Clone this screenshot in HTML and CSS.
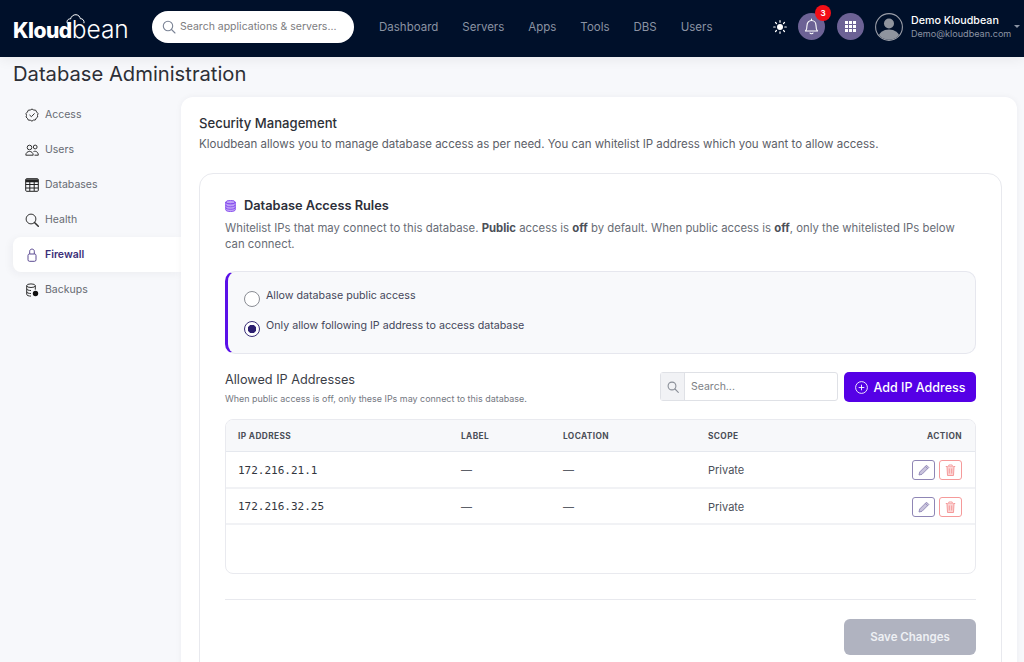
FILE: index.html
```html
<!DOCTYPE html>
<html lang="en">
<head>
  <meta charset="UTF-8">
  <title>Database Administration</title>
  <link rel="stylesheet" href="styles.css">
</head>
<body>
  <header class="topbar">
    <a class="logo" href="#">
      <svg class="logoCloud" width="19" height="10" viewBox="0 0 19 10"><path d="M1.500 9.500C.2 7 2 4.500 4.500 5 5 2.500 7.500.5 10 .7c2.500.2 4 2 4.300 4 2.300-.3 4.200 1.800 3.700 4.500" fill="none" stroke="#fff" stroke-width="1"/></svg>
      <b>Kloud</b><span>bean</span>
    </a>
    <div class="topSearch">
      <svg width="14" height="14" viewBox="0 0 14 14" fill="none" stroke="#7b8496" stroke-width="1.100"><circle cx="6" cy="6" r="4.700"/><path d="M9.500 9.500l3.500 3.500" stroke-linecap="round"/></svg>
      <span>Search applications &amp; servers...</span>
    </div>
    <nav class="nav">
      <a href="#">Dashboard</a>
      <a href="#">Servers</a>
      <a href="#">Apps</a>
      <a href="#">Tools</a>
      <a href="#">DBS</a>
      <a href="#">Users</a>
    </nav>
    <div class="tools">
      <svg class="sun" width="14" height="14" viewBox="0 0 14 14" stroke="#fff" stroke-width="1.200" stroke-linecap="round"><circle cx="7" cy="7" r="3" fill="#fff" stroke="none"/><path d="M7 .7v1.500M7 11.800v1.500M.7 7h1.500M11.800 7h1.500M2.500 2.500l1 1M10.500 10.500l1 1M2.500 11.500l1-1M10.500 3.500l1-1"/></svg>
      <div class="circleBtn">
        <svg width="15" height="17" viewBox="0 0 15 17" fill="none" stroke="#fff" stroke-width="1.100"><path d="M1.500 13c1.200-1.200 1.500-2.500 1.500-5.500C3 4.500 5 2.500 7.500 2.500S12 4.500 12 7.500c0 3 .3 4.300 1.500 5.500z" stroke-linejoin="round"/><path d="M7.500 1v1.500M6 15c.5 1 2.500 1 3 0" stroke-linecap="round"/></svg>
        <span class="badge">3</span>
      </div>
      <div class="circleBtn">
        <svg width="11" height="11" viewBox="0 0 11 11" fill="#fff"><rect width="3" height="3"/><rect x="4" width="3" height="3"/><rect x="8" width="3" height="3"/><rect y="4" width="3" height="3"/><rect x="4" y="4" width="3" height="3"/><rect x="8" y="4" width="3" height="3"/><rect y="8" width="3" height="3"/><rect x="4" y="8" width="3" height="3"/><rect x="8" y="8" width="3" height="3"/></svg>
      </div>
      <svg class="avatar" width="28" height="28" viewBox="0 0 28 28"><defs><clipPath id="avatarClip"><circle cx="14" cy="14" r="12.800"/></clipPath></defs><g clip-path="url(#avatarClip)" fill="#8f949e"><circle cx="14" cy="10.500" r="5"/><ellipse cx="14" cy="24" rx="10.500" ry="7.500"/></g><circle cx="14" cy="14" r="13.400" fill="none" stroke="#9a9ea8" stroke-width="1.100"/></svg>
      <div class="who">
        <div class="whoName">Demo Kloudbean</div>
        <div class="whoMail">Demo@kloudbean.com</div>
      </div>
      <i class="caret"></i>
    </div>
  </header>

  <h1 class="pageTitle">Database Administration</h1>

  <div class="layout">
    <ul class="side">
      <li>
        <svg width="14" height="14" viewBox="0 0 14 14" fill="none" stroke="#333" stroke-width="1"><path d="M7 1l1.700 1 2 .2.9 1.800 1.400 1.500L12.500 7.500l.2 1.500-1.500 1.200-.9 1.800-2 .1L7 13.200l-1.700-1-2-.1-.9-1.800L1 9l.5-1.500L1 5.500 2.400 4l.9-1.800 2-.2z" stroke-linejoin="round"/><path d="M4.800 7.200l1.600 1.500 2.900-3" stroke-linecap="round"/></svg>
        Access
      </li>
      <li>
        <svg width="14" height="14" viewBox="0 0 14 14" fill="none" stroke="#333" stroke-width="1"><circle cx="4.500" cy="4.500" r="2.300"/><circle cx="10.200" cy="4" r="1.900"/><path d="M.8 12.200c0-5 7.400-5 7.400 0zM9.500 12.200h3.800c0-3.300-2.500-4.500-4.800-3.700"/></svg>
        Users
      </li>
      <li>
        <svg width="14" height="14" viewBox="0 0 14 14" fill="none" stroke="#222" stroke-width="1"><rect x=".7" y=".7" width="12.600" height="12.600" rx="1"/><path d="M.7 2.800h12.600" stroke-width="3"/><path d="M.7 6.500h12.600M.7 10h12.600M4.800 3v10M9.200 3v10"/></svg>
        Databases
      </li>
      <li>
        <svg width="14" height="14" viewBox="0 0 14 14" fill="none" stroke="#333" stroke-width="1"><circle cx="6" cy="6" r="4.900"/><path d="M9.500 9.500l3.800 3.800" stroke-width="1.500" stroke-linecap="round"/></svg>
        Health
      </li>
      <li class="active">
        <svg width="14" height="14" viewBox="0 0 14 14" fill="none" stroke="#5b4a92" stroke-width="1"><rect x="3" y="6" width="8" height="7.300" rx="1.500"/><path d="M4.700 6V3.200C4.700 .4 9.300 .4 9.300 3.200V6"/></svg>
        Firewall
      </li>
      <li>
        <svg width="14" height="14" viewBox="0 0 14 14" fill="none" stroke="#333" stroke-width="1"><ellipse cx="6" cy="2.700" rx="4.300" ry="1.800"/><path d="M1.700 2.700v8.600c0 1.200 2 1.800 4.300 1.800M10.300 2.700v4M1.700 5.700c0 1.200 2 1.800 4.300 1.800M1.700 8.700c0 1.200 2 1.800 4.300 1.800"/><circle cx="10.500" cy="10.500" r="2.700" fill="#111" stroke="none"/></svg>
        Backups
      </li>
    </ul>

    <main class="main">
      <h2 class="secTitle">Security Management</h2>
      <p class="secText">Kloudbean allows you to manage database access as per need. You can whitelist IP address which you want to allow access.</p>

      <section class="rules">
        <h3 class="rulesTitle">
          <svg width="11" height="12" viewBox="0 0 11 12" fill="#c0a2f7" stroke="#7a3cec" stroke-width=".8"><ellipse cx="5.500" cy="2.200" rx="4.800" ry="1.800"/><path d="M.7 2.200v7.600c0 1 2.200 1.800 4.800 1.800s4.800-.8 4.800-1.800V2.200c0 1-2.200 1.800-4.800 1.800S.7 3.200.7 2.200z"/><path d="M.7 5c0 1 2.200 1.800 4.800 1.800S10.300 6 10.300 5M.7 7.500c0 1 2.200 1.800 4.800 1.800s4.800-.8 4.800-1.800" fill="none"/></svg>
          Database Access Rules
        </h3>
        <p class="rulesText">Whitelist IPs that may connect to this database. <b>Public</b> access is <b>off</b> by default. When public access is <b>off</b>, only the whitelisted IPs below can connect.</p>

        <div class="choice">
          <label class="radioRow"><i class="radio"></i><span>Allow database public access</span></label>
          <label class="radioRow"><i class="radio on"></i><span>Only allow following IP address to access database</span></label>
        </div>

        <div class="allowedHead">
          <div class="allowedInfo">
            <h4>Allowed IP Addresses</h4>
            <p>When public access is off, only these IPs may connect to this database.</p>
          </div>
          <div class="ipSearch">
            <span class="addon"><svg width="12" height="12" viewBox="0 0 12 12" fill="none" stroke="#8a8f98" stroke-width="1.100"><circle cx="5" cy="5" r="3.900"/><path d="M8 8l3.300 3.300" stroke-linecap="round"/></svg></span>
            <span class="ipSearchText">Search...</span>
          </div>
          <button class="addBtn">
            <svg width="13" height="13" viewBox="0 0 13 13" fill="none" stroke="#fff" stroke-width=".9"><circle cx="6.500" cy="6.500" r="5.900"/><path d="M6.500 3.700v5.600M3.700 6.500h5.600"/></svg>
            Add IP Address
          </button>
        </div>

        <div class="ipTable">
          <div class="ipRow ipHead">
            <div>IP ADDRESS</div><div>LABEL</div><div>LOCATION</div><div>SCOPE</div><div class="actionCol">ACTION</div>
          </div>
          <div class="ipRow">
            <div class="mono">172.216.21.1</div><div class="dash">—</div><div class="dash">—</div><div>Private</div>
            <div class="actionCol">
              <a class="iconBtn editBtn" href="#"><svg width="12" height="12" viewBox="0 0 12 12" fill="#c9c4dc" stroke="#8f86b5" stroke-width=".9"><path d="M1 11l.7-3L8.500 1.200l2.300 2.300L4 10.300zM7.300 2.400l2.300 2.300"/></svg></a>
              <a class="iconBtn delBtn" href="#"><svg width="11" height="12" viewBox="0 0 11 12" fill="#fbd5d5" stroke="#f59a9a" stroke-width="1"><path d="M.8 2.500h9.400M3.800 2.500V1h3.400v1.500" fill="none"/><path d="M2 2.500l.5 9h6l.5-9M4.300 4.500v5M6.700 4.500v5"/></svg></a>
            </div>
          </div>
          <div class="ipRow">
            <div class="mono">172.216.32.25</div><div class="dash">—</div><div class="dash">—</div><div>Private</div>
            <div class="actionCol">
              <a class="iconBtn editBtn" href="#"><svg width="12" height="12" viewBox="0 0 12 12" fill="#c9c4dc" stroke="#8f86b5" stroke-width=".9"><path d="M1 11l.7-3L8.500 1.200l2.300 2.300L4 10.300zM7.300 2.400l2.300 2.300"/></svg></a>
              <a class="iconBtn delBtn" href="#"><svg width="11" height="12" viewBox="0 0 11 12" fill="#fbd5d5" stroke="#f59a9a" stroke-width="1"><path d="M.8 2.500h9.400M3.800 2.500V1h3.400v1.500" fill="none"/><path d="M2 2.500l.5 9h6l.5-9M4.300 4.500v5M6.700 4.500v5"/></svg></a>
            </div>
          </div>
          <div class="ipEmpty"></div>
        </div>

        <hr class="rule">
        <div class="saveRow"><button class="saveBtn">Save Changes</button></div>
      </section>
    </main>
  </div>
</body>
</html>
```

FILE: styles.css
```css
*{
  margin: 0;
  padding: 0;
  box-sizing: border-box;
}
html, body{
  height: 100%;
  overflow: hidden;
}
body{
  background: #f7f8fb;
  font-family: Inter, "Liberation Sans", sans-serif;
  color: #333;
}
a{
  text-decoration: none;
  color: inherit;
}
ul{
  list-style: none;
}
/* header */
.topbar{
  height: 57px;
  background: #00102a;
  display: flex;
  align-items: center;
  padding: 0 4px 4px 13px;
  box-shadow: 0 3px 12px rgba(0, 0, 0, .06);
  position: relative;
}
.logo{
  width: 139px;
  color: #fff;
  font-size: 21px;
  line-height: 24px;
  position: relative;
  padding-top: 6px;
  white-space: nowrap;
}
.logo b{
  font-weight: 800;
  letter-spacing: -.5px;
}
.logo span{
  font-size: 24.500px;
  font-weight: 300;
}
.logoCloud{
  position: absolute;
  left: 53px;
  top: 3px;
}
.topSearch{
  width: 202px;
  height: 32px;
  background: #fff;
  border-radius: 16px;
  display: flex;
  align-items: center;
  gap: 4px;
  padding-left: 10px;
  margin-right: 25px;
  font-size: 10.500px;
  color: #7c7c80;
}
.nav{
  display: flex;
  gap: 24px;
  font-size: 11.500px;
  color: #8b93a3;
}
.tools{
  margin-left: auto;
  display: flex;
  align-items: center;
}
.sun{
  margin-right: 11px;
}
.circleBtn{
  width: 27px;
  height: 27px;
  border-radius: 50%;
  background: #6c6295;
  display: flex;
  align-items: center;
  justify-content: center;
  position: relative;
  margin-right: 12px;
}
.badge{
  position: absolute;
  top: -8px;
  right: -6px;
  width: 16px;
  height: 16px;
  border-radius: 50%;
  background: #f30f17;
  color: #fff;
  font-size: 8px;
  font-weight: 700;
  line-height: 16px;
  text-align: center;
}
.avatar{
  margin: 0 8px 0 -1px;
}
.who{
  width: 103px;
}
.whoName{
  color: #fff;
  font-size: 10.700px;
  font-weight: 500;
  line-height: 14px;
}
.whoMail{
  color: #8b93a3;
  font-size: 9.100px;
  line-height: 12px;
}
.caret{
  border-top: 3px solid #8b93a3;
  border-left: 3px solid transparent;
  border-right: 3px solid transparent;
}
/* page */
.pageTitle{
  font-size: 20.200px;
  font-weight: 400;
  color: #2d2f36;
  line-height: 24px;
  padding: 5px 0 0 13px;
  height: 40px;
}
.layout{
  display: flex;
  align-items: flex-start;
  padding-left: 13px;
}
.side{
  width: 168px;
  font-size: 10.500px;
  color: #666a72;
}
.side li{
  height: 35px;
  display: flex;
  align-items: center;
  gap: 6px;
  padding-left: 12px;
  border-radius: 8px 0 0 8px;
}
.side li svg{
  flex: none;
}
.side .active{
  background: #fff;
  color: #3a2e78;
  font-weight: 600;
  box-shadow: -2px 2px 8px rgba(30, 30, 60, .05);
}
.main{
  width: 836px;
  height: 700px;
  background: #fff;
  border-radius: 12px 12px 0 0;
  padding: 18px 15px 0 18px;
  box-shadow: 0 0 6px rgba(30, 30, 60, .05);
}
.secTitle{
  font-size: 13.100px;
  font-weight: 500;
  color: #2d2f36;
  line-height: 17px;
}
.secText{
  font-size: 11.500px;
  color: #5c6068;
  line-height: 16px;
  margin-top: 4px;
}
.rules{
  margin-top: 21px;
  border: 1px solid #e8e9ee;
  border-radius: 14px;
  padding: 23px 25px 0;
  height: 560px;
}
.rulesTitle{
  font-size: 12.800px;
  font-weight: 600;
  color: #2d2f3a;
  line-height: 18px;
  display: flex;
  align-items: center;
  gap: 8px;
}
.rulesText{
  max-width: 735px;
  font-size: 11.350px;
  line-height: 16px;
  color: #686c75;
  margin-top: 5px;
}
.rulesText b{
  color: #4b4f58;
  font-weight: 700;
}
.choice{
  height: 83px;
  margin-top: 19px;
  background: #f8f9fb;
  border: 1px solid #e6e7ee;
  border-left: 3px solid #5a10e8;
  border-radius: 10px;
  padding: 16px 0 0 16px;
  display: flex;
  flex-direction: column;
  gap: 8px;
}
.radioRow{
  height: 22px;
  display: flex;
  align-items: center;
  gap: 6px;
  font-size: 10.700px;
  color: #44475a;
}
.radioRow span{
  margin-top: -8px;
}
.radio{
  width: 16px;
  height: 16px;
  border: 1px solid #8a8d94;
  border-radius: 50%;
  background: #fff;
}
.radio.on{
  border-color: #3a2e78;
  background: radial-gradient(circle, #2c1f70 0 4px, #fff 4.500px);
}
.allowedHead{
  display: flex;
  align-items: flex-start;
  margin-top: 18px;
}
.allowedInfo{
  flex: 1;
}
.allowedInfo h4{
  font-size: 12.700px;
  font-weight: 400;
  color: #3b3e47;
  line-height: 16px;
}
.allowedInfo p{
  font-size: 8.950px;
  color: #74777f;
  line-height: 12px;
  margin-top: 5px;
}
.ipSearch{
  width: 178px;
  height: 29px;
  border: 1px solid #dfe1e6;
  border-radius: 3px;
  display: flex;
  align-items: center;
  margin-right: 6px;
  font-size: 10.500px;
  color: #7c7f86;
}
.addon{
  width: 24px;
  height: 100%;
  background: #f1f2f5;
  border-right: 1px solid #dfe1e6;
  display: flex;
  align-items: center;
  justify-content: center;
}
.ipSearchText{
  padding-left: 6px;
}
.addBtn{
  width: 132px;
  height: 30px;
  background: #5500e6;
  border: 0;
  border-radius: 5px;
  color: #fff;
  font-family: inherit;
  font-size: 12.500px;
  font-weight: 500;
  display: flex;
  align-items: center;
  justify-content: center;
  gap: 6px;
}
.ipTable{
  margin-top: 14px;
  border: 1px solid #e9eaef;
  border-radius: 8px;
  overflow: hidden;
  font-size: 11px;
  color: #4b4f58;
}
.ipRow{
  display: grid;
  grid-template-columns: 223px 102px 145px 1fr 100px;
  align-items: center;
  height: 36.500px;
  padding: 2px 13px 0 12px;
  border-bottom: 2px solid #f1f2f5;
}
.ipHead{
  height: 32px;
  padding-top: 0;
  background: #f7f8fa;
  border-bottom: 1px solid #e5e8ee;
  font-size: 8.300px;
  font-weight: 700;
  letter-spacing: .4px;
  color: #4a4e57;
}
.mono{
  font-family: "DejaVu Sans Mono", "Liberation Mono", monospace;
  font-size: 11px;
  color: #33363e;
  font-weight: 500;
}
.dash{
  color: #5c6068;
}
.actionCol{
  display: flex;
  justify-content: flex-end;
  gap: 4px;
}
.iconBtn{
  width: 23px;
  height: 20px;
  border: 1px solid;
  border-radius: 3px;
  display: flex;
  align-items: center;
  justify-content: center;
}
.editBtn{
  border-color: #8f86b5;
}
.delBtn{
  border-color: #f59a9a;
}
.ipEmpty{
  height: 48px;
}
.rule{
  border: 0;
  border-top: 1px solid #e8e9ee;
  margin-top: 25px;
}
.saveRow{
  display: flex;
  justify-content: flex-end;
  margin-top: 19px;
}
.saveBtn{
  width: 132px;
  height: 36px;
  background: #b0b3c0;
  border: 0;
  border-radius: 6px;
  color: #eef0f4;
  font-family: inherit;
  font-size: 11.500px;
  font-weight: 600;
}
```
